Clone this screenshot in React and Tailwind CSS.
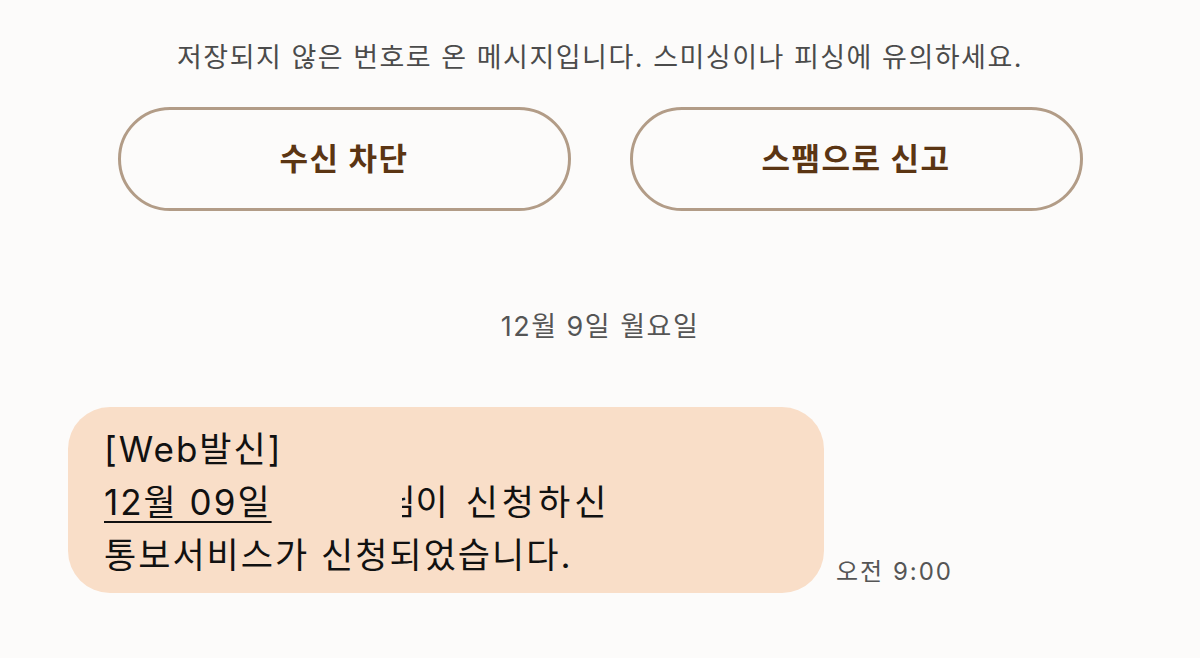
import React from 'react';

const font = { fontFamily: "Inter, 'Noto Sans CJK KR', sans-serif" };

export default function App() {
    return (
        <div className="w-[1200px] h-[658px] overflow-hidden bg-[#fcfbfa] text-[#222]" style={font}>
            {/* notice */}
            <p className="pt-[42px] text-center text-[27px] leading-[32px] text-[#4b4b4b] tracking-[1.5px]">
                저장되지 않은 번호로 온 메시지입니다. 스미싱이나 피싱에 유의하세요.
            </p>

            {/* actions */}
            <div className="mt-[33px] flex justify-center gap-[59px]">
                <button className="w-[453px] h-[104px] rounded-full border-[3px] border-[#b29c87] text-[31px] font-bold tracking-[1.5px] text-[#5b3513]">
                    수신 차단
                </button>
                <button className="w-[453px] h-[104px] rounded-full border-[3px] border-[#b29c87] text-[31px] font-bold tracking-[1.5px] text-[#5b3513]">
                    스팸으로 신고
                </button>
            </div>

            {/* date divider */}
            <p className="mt-[100px] text-center text-[27px] leading-[32px] tracking-[1.5px] text-[#555]">12월 9일 월요일</p>

            {/* message */}
            <div className="mt-[64px] pl-[68px] flex items-end">
                <div className="w-[756px] rounded-[42px] bg-[#f9dec8] pl-[36px] pr-[30px] pt-[16px] pb-[11px] text-[35px] leading-[53px] text-[#111] tracking-[2px]">
                    <div>[Web발신]</div>
                    <div className="flex items-center">
                        <span className="underline decoration-2 underline-offset-[6px]">12월 09일</span>
                        <span className="w-[130px]" />
                        <span className="inline-flex justify-end w-[14px] overflow-hidden tracking-normal">님</span>
                        <span className="tracking-[4px]">이 신청하신</span>
                    </div>
                    <div>통보서비스가 신청되었습니다.</div>
                </div>
                <span className="ml-[12px] mb-[6px] text-[24px] leading-[30px] tracking-[2px] text-[#555]">오전 9:00</span>
            </div>
        </div>
    );
}
